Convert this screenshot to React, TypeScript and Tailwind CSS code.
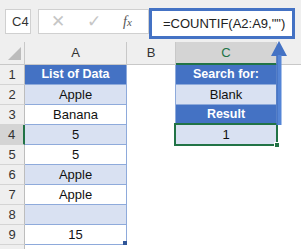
import React from 'react';

const rowsA: { text: string; kind: 'head' | 'band' | 'plain' }[] = [
  { text: 'List of Data', kind: 'head' },
  { text: 'Apple', kind: 'band' },
  { text: 'Banana', kind: 'plain' },
  { text: '5', kind: 'band' },
  { text: '5', kind: 'plain' },
  { text: 'Apple', kind: 'band' },
  { text: 'Apple', kind: 'plain' },
  { text: '', kind: 'band' },
  { text: '15', kind: 'plain' },
];

const rowsC: { text: string; kind: 'head' | 'band' }[] = [
  { text: 'Search for:', kind: 'head' },
  { text: 'Blank', kind: 'band' },
  { text: 'Result', kind: 'head' },
  { text: '1', kind: 'band' },
];

function cellTone(kind: string) {
  if (kind === 'head') return 'bg-[#4472c4] text-white font-bold text-[12.5px]';
  if (kind === 'band') return 'bg-[#d9e1f2] text-[#111] text-[13px]';
  return 'bg-white text-[#111] text-[13px]';
}

export default function App() {
  return (
    <div
      className="relative h-[249px] w-[301px] overflow-hidden bg-[#efefef]"
      style={{ fontFamily: '"Liberation Sans", Arial, sans-serif' }}
    >
      {/* Formula bar */}
      <div className="flex h-[42px] items-start pt-[8px]">
        <div className="ml-[5px] mt-[1px] flex h-[25px] w-[26px] items-center border border-[#d0d0d0] bg-white pl-[6px] text-[13px] text-[#333]">
          C4
        </div>
        <div className="ml-[7px] mt-[1px] flex h-[25px] w-[111px] items-center border border-[#d0d0d0] bg-white">
          <span className="ml-[12px] text-[17px] leading-none text-[#c6c6c6]">✕</span>
          <span className="ml-[22px] text-[17px] leading-none text-[#c6c6c6]">✓</span>
          <span
            className="ml-[22px] text-[14px] italic text-[#555]"
            style={{ fontFamily: '"Liberation Serif", serif' }}
          >
            f<span className="text-[11px]">x</span>
          </span>
        </div>
        <div className="flex h-[31px] w-[146px] items-center border-[3px] border-[#4472c4] bg-white pl-[11px] text-[13px] text-[#222]">
          =COUNTIF(A2:A9,"")
        </div>
      </div>

      {/* Sheet grid */}
      <div className="grid grid-cols-[25px_102px_49px_101px_1fr] grid-rows-[23px_repeat(10,20px)]">
        {/* header row */}
        <div className="relative border-b border-r border-[#c8c8c8] bg-[#efefef]">
          <svg className="absolute bottom-[4px] right-[3px]" width="13" height="13" viewBox="0 0 13 13">
            <polygon points="13,0 13,13 0,13" fill="#bcbcbc" />
          </svg>
        </div>
        <div className="flex items-center justify-center border-b border-r border-[#c8c8c8] bg-[#efefef] text-[13px] text-[#333]">A</div>
        <div className="flex items-center justify-center border-b border-r border-[#c8c8c8] bg-[#efefef] text-[13px] text-[#333]">B</div>
        <div className="flex items-center justify-center border-b-2 border-r border-b-[#217346] border-r-[#c8c8c8] bg-[#d4d4d4] text-[13px] text-[#217346]">C</div>
        <div className="border-b border-[#c8c8c8] bg-[#efefef]" />

        {Array.from({ length: 10 }).map((_, i) => {
          const r = i + 1;
          const a = rowsA[i];
          const c = rowsC[i];
          const selRow = r === 4;
          return (
            <React.Fragment key={r}>
              <div
                className={`flex items-center justify-center border-b border-[#d4d4d4] text-[13px] text-[#333] ${
                  selRow ? 'border-r-2 border-r-[#217346] bg-[#d4d4d4]' : 'border-r border-r-[#bdbdbd] bg-[#efefef]'
                }`}
              >
                {r <= 9 ? r : ''}
              </div>
              {a ? (
                <div className={`relative flex items-center justify-center border-b border-r border-[#8eaadb] ${cellTone(a.kind)}`}>
                  {a.text}
                  {r === 9 && <span className="absolute bottom-[-1px] right-[-1px] h-[4px] w-[4px] bg-[#2f5597]" />}
                </div>
              ) : (
                <div className="bg-white" />
              )}
              <div className={c ? 'border-r border-[#8eaadb] bg-white' : 'bg-white'} />
              {c ? (
                <div className={`relative flex items-center justify-center border-b border-r border-[#8eaadb] ${cellTone(c.kind)}`}>
                  {c.text}
                  {r === 4 && (
                    <>
                      <span className="absolute inset-[-2px] border-2 border-[#217346]" />
                      <span className="absolute bottom-[-4px] right-[-4px] h-[6px] w-[6px] border border-white bg-[#217346]" />
                    </>
                  )}
                </div>
              ) : (
                <div className="bg-white" />
              )}
              <div className="bg-white" />
            </React.Fragment>
          );
        })}
      </div>

      {/* Arrow from result to formula */}
      <svg className="absolute left-[270px] top-[40px]" width="18" height="86" viewBox="0 0 18 86">
        <polygon points="9,1 17,16 1,16" fill="#4472c4" />
        <rect x="6.5" y="15" width="5" height="70" fill="#5585d6" />
        <rect x="6.5" y="15" width="1" height="70" fill="#3e69b5" />
      </svg>
    </div>
  );
}
